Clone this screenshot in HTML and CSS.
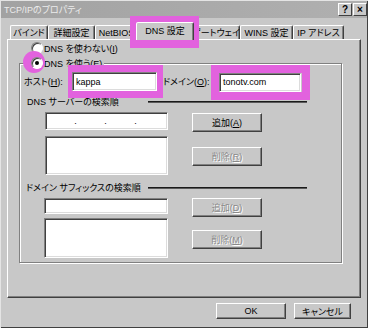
FILE: index.html
```html
<!DOCTYPE html>
<html>
<head>
  <title>TCP/IPのプロパティ</title>
  <link rel="stylesheet" href="styles.css">
</head>
<body>
  <div class="window">
    <div class="titlebar">
      <span class="title">TCP/IPのプロパティ</span>
      <div class="caption-btns">
        <span class="cbtn">?</span>
        <span class="cbtn">×</span>
      </div>
    </div>

    <div class="content">
      <!-- tabs -->
      <div class="tabs">
        <div class="tab t-bind">バインド</div>
        <div class="tab t-adv">詳細設定</div>
        <div class="tab t-nb">NetBIOS</div>
        <div class="tab t-dns active">DNS 設定</div>
        <div class="tab t-gw">ゲートウェイ</div>
        <div class="tab t-wins">WINS 設定</div>
        <div class="tab t-ip">IP アドレス</div>
      </div>

      <div class="panel">
        <div class="radio-row">
          <span class="radio"></span>
          <span>DNS を使わない(<u>I</u>)</span>
        </div>

        <div class="group">
          <div class="legend">
            <span class="radio checked"></span>
            <span>DNS を使う(<u>E</u>)</span>
          </div>

          <div class="host-row">
            <span class="lbl-host">ホスト(<u>H</u>):</span>
            <div class="field host">kappa</div>
            <span class="lbl-dom">ドメイン(<u>O</u>):</span>
            <div class="field dom">tonotv.com</div>
          </div>

          <div class="sec-head">
            <span class="head-text">DNS サーバーの検索順</span>
            <span class="rule"></span>
          </div>
          <div class="sec">
            <div class="col-left">
              <div class="field ip">
                <span class="dot">.</span><span class="dot">.</span><span class="dot">.</span>
              </div>
              <div class="field list"></div>
            </div>
            <div class="col-right">
              <div class="btn">追加(<u>A</u>)</div>
              <div class="btn off">削除(<u>R</u>)</div>
            </div>
          </div>

          <div class="sec-head suffix-head">
            <span class="head-text">ドメイン サフィックスの検索順</span>
            <span class="rule"></span>
          </div>
          <div class="sec suffix">
            <div class="col-left">
              <div class="field suffix-in"></div>
              <div class="field list"></div>
            </div>
            <div class="col-right">
              <div class="btn off">追加(<u>D</u>)</div>
              <div class="btn off">削除(<u>M</u>)</div>
            </div>
          </div>
        </div>
      </div>

      <div class="footer">
        <div class="btn ok">OK</div>
        <div class="btn cancel">キャンセル</div>
      </div>
    </div>

    <!-- highlight marks drawn over the dialog -->
    <div class="mark mark-tab"></div>
    <div class="mark mark-host"></div>
    <div class="mark mark-dom"></div>
  </div>
</body>
</html>
```

FILE: styles.css
```css
body {
  margin: 0;
  background-color: #c8c8c8;
  font-family: "Liberation Sans", "Noto Sans CJK JP", sans-serif;
  font-size: 9px;
  font-feature-settings: "palt";
  color: #000;
}

u {
  text-underline-offset: 1px;
}

.window {
  position: relative;
  width: 368px;
  height: 328px;
  box-sizing: border-box;
  background-color: #c8c8c8;
  box-shadow: inset 1px 1px #e4e4e4, inset -1px -1px #404040;
  overflow: hidden;
}

/* title bar */
.titlebar {
  margin: 1px 1px 0;
  height: 17px;
  display: flex;
  align-items: center;
  padding: 0 0 0 3px;
  background: linear-gradient(90deg, #a2a2a2, #b0b0b0);
}

.title {
  flex: 1;
  color: #ececec;
}

.caption-btns {
  display: flex;
  gap: 1px;
}

.cbtn {
  width: 14px;
  height: 13px;
  box-sizing: border-box;
  display: flex;
  align-items: center;
  justify-content: center;
  background-color: #c8c8c8;
  border: 1px solid;
  border-color: #fff #404040 #404040 #fff;
  font-size: 10px;
  font-weight: bold;
  line-height: 1;
}

.content {
  padding: 0 7px;
}

/* tabs */
.tabs {
  display: flex;
  align-items: flex-end;
  height: 21px;
  padding-left: 3px;
}

.tab {
  height: 14px;
  box-sizing: border-box;
  display: flex;
  align-items: center;
  justify-content: center;
  white-space: nowrap;
  border: 1px solid;
  border-bottom: 0;
  border-color: #fff #404040 transparent #fff;
  border-radius: 2px 2px 0 0;
  box-shadow: inset -1px 0 #808080;
}

.t-bind { width: 38px; }
.t-adv { width: 47px; }
.t-nb { width: 43px; }
.t-dns { width: 54px; }
.t-gw { width: 48px; }
.t-wins { width: 53px; }
.t-ip { width: 51px; }

.tab.active {
  position: relative;
  z-index: 1;
  width: 58px;
  height: 18px;
  margin: 0 -2px -1px;
  padding-bottom: 2px;
  background-color: #c8c8c8;
}

/* tab page */
.panel {
  height: 259px;
  box-sizing: border-box;
  border: 1px solid;
  border-color: #fff #404040 #404040 #fff;
  box-shadow: inset -1px -1px #808080;
}

.radio-row {
  display: flex;
  align-items: center;
  gap: 1px;
  height: 16px;
  padding-left: 23px;
}

.radio {
  position: relative;
  width: 12px;
  height: 12px;
  box-sizing: border-box;
  border-radius: 50%;
  background-color: #fff;
  border: 1px solid;
  border-color: #808080 #fff #fff #808080;
  box-shadow: inset 1px 1px #404040;
}

.radio.checked {
  box-shadow: inset 1px 1px #404040, -3px -1px 0 5px #e262de;
}

.radio.checked::after {
  content: "";
  position: absolute;
  left: 3px;
  top: 3px;
  width: 4px;
  height: 4px;
  border-radius: 50%;
  background-color: #000;
}

.group {
  margin: 7px 0 0 11px;
  width: 323px;
  height: 200px;
  box-sizing: border-box;
  border: 1px solid #808080;
  box-shadow: 1px 1px 0 #fff, inset 1px 1px 0 #fff;
}

.legend {
  display: flex;
  align-items: center;
  gap: 1px;
  width: fit-content;
  height: 14px;
  margin: -8px 0 0 11px;
  padding-right: 2px;
  background-color: #c8c8c8;
}

.host-row {
  display: flex;
  align-items: center;
  height: 19px;
  margin-top: 2px;
  padding-left: 4px;
}

.lbl-host {
  width: 48px;
}

.lbl-dom {
  width: 56px;
  margin-left: 6px;
}

.field {
  box-sizing: border-box;
  display: flex;
  align-items: center;
  padding-left: 3px;
  background-color: #fff;
  border: 1px solid;
  border-color: #808080 #fff #fff #808080;
  box-shadow: inset 1px 1px #404040, inset -1px -1px #dcdcdc;
}

.field.host {
  width: 85px;
  height: 19px;
}

.field.dom {
  width: 82px;
  height: 19px;
  margin-top: 1px;
}

.sec-head {
  display: flex;
  align-items: center;
  height: 21px;
}

.head-text {
  width: 128px;
  box-sizing: border-box;
  padding-left: 7px;
  white-space: nowrap;
}

.rule {
  width: 159px;
  height: 1px;
  background-color: #1a1a1a;
  border-bottom: 1px solid #5a5a5a;
}

.sec {
  display: flex;
  padding-left: 25px;
}

.col-left {
  width: 123px;
  display: flex;
  flex-direction: column;
  gap: 6px;
}

.col-right {
  width: 70px;
  margin-left: 24px;
  padding-top: 1px;
  display: flex;
  flex-direction: column;
  gap: 15px;
}

.field.ip {
  height: 18px;
  padding-left: 28px;
  gap: 27px;
}

.dot {
  width: 3px;
  text-align: center;
}

.field.list {
  height: 39px;
}

.suffix-head {
  margin-top: 2px;
}

.suffix-head .head-text {
  padding-left: 6px;
}

.sec.suffix {
  padding-left: 24px;
}

.suffix .col-left {
  width: 124px;
  gap: 4px;
}

.suffix .col-right {
  padding-top: 0;
  gap: 13px;
}

.field.suffix-in {
  height: 16px;
}

.suffix .field.list {
  height: 40px;
}

/* push buttons */
.btn {
  height: 19px;
  box-sizing: border-box;
  display: flex;
  align-items: center;
  justify-content: center;
  background-color: #c8c8c8;
  border: 1px solid;
  border-color: #fff #404040 #404040 #fff;
  box-shadow: inset -1px -1px #808080;
}

.btn.off {
  color: #8a8a8a;
  text-shadow: 1px 1px #fff;
}

.footer {
  display: flex;
  justify-content: flex-end;
  gap: 8px;
  padding: 5px 10px 0 0;
}

.btn.ok {
  width: 70px;
  height: 16px;
}

.btn.cancel {
  width: 57px;
  height: 16px;
}

/* magenta marks */
.mark {
  position: absolute;
  box-sizing: border-box;
  border: 8px solid #e262de;
}

.mark-tab {
  left: 130px;
  top: 16px;
  width: 69px;
  height: 32px;
  border-top-width: 7px;
}

.mark-host {
  left: 68px;
  top: 65px;
  width: 95px;
  height: 33px;
  border-width: 7px 6px 7px 4px;
}

.mark-dom {
  left: 211px;
  top: 65px;
  width: 99px;
  height: 35px;
}
```
